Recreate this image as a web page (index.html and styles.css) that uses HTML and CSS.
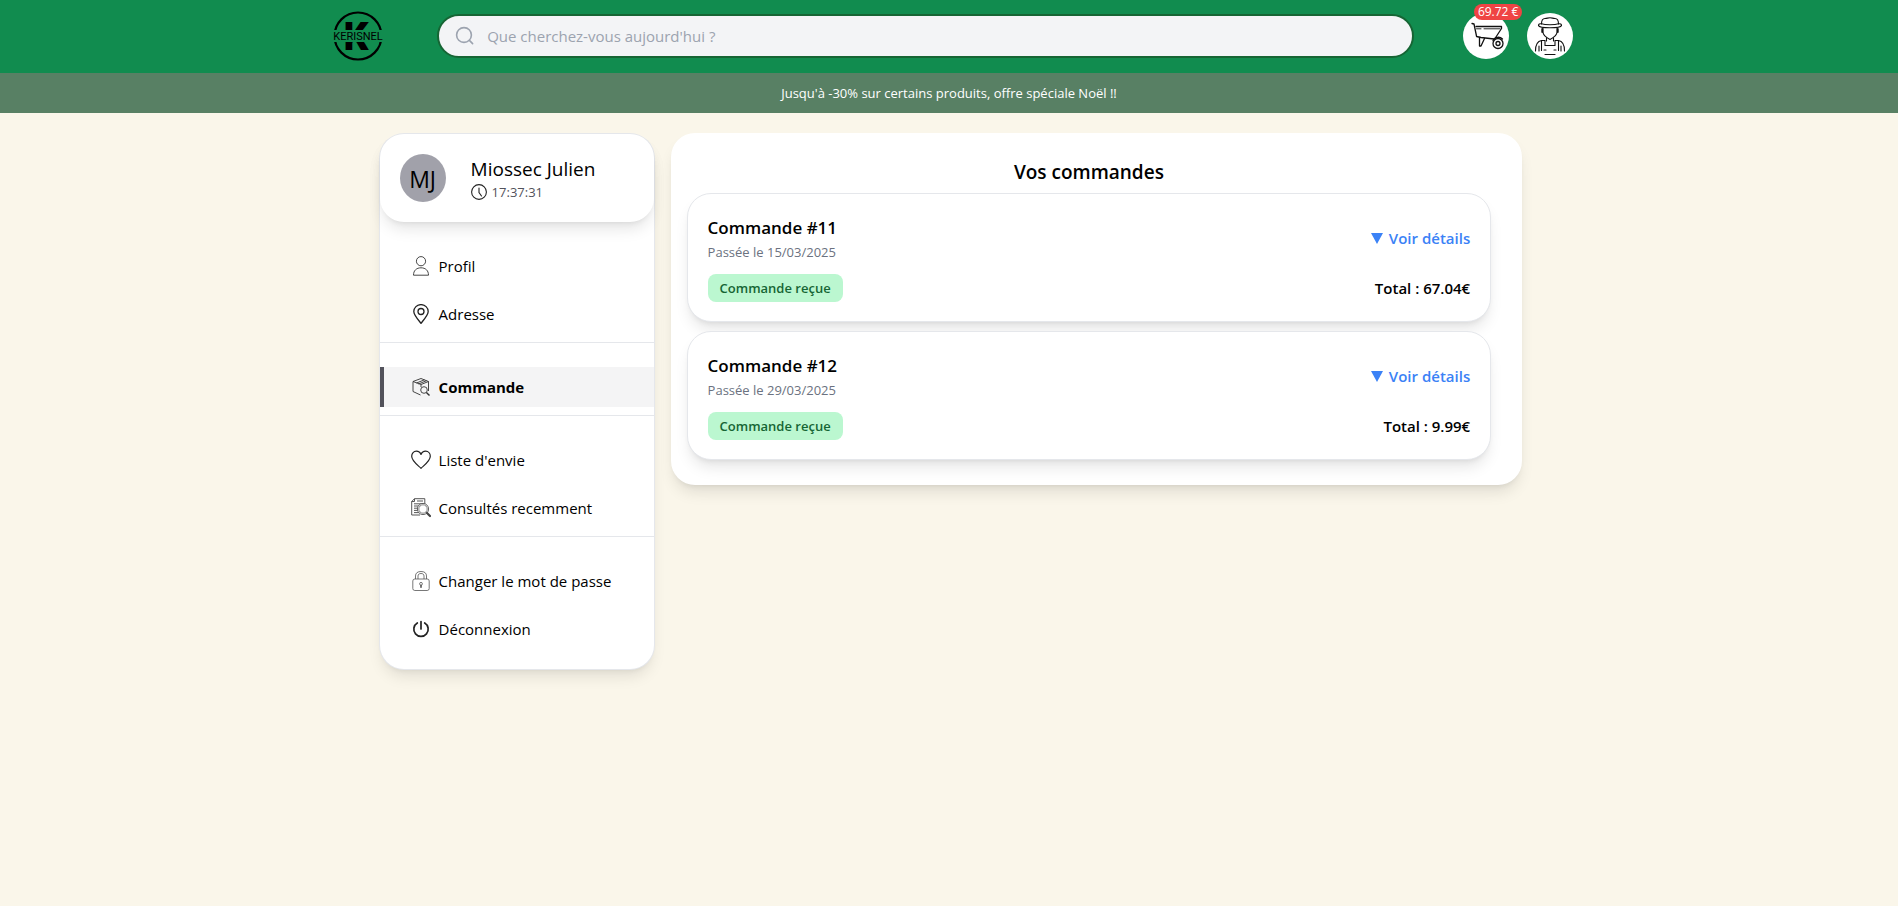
FILE: index.html
```html
<!DOCTYPE html>
<html lang="fr">
<head>
<meta charset="utf-8">
<meta name="viewport" content="width=device-width, initial-scale=1">
<title>Kerisnel - Vos commandes</title>
<link rel="stylesheet" href="styles.css">
</head>
<body>
<header class="topbar">
  <a class="logo" href="#" aria-label="Kerisnel">
    <svg viewBox="0 0 52 52" width="52" height="52">
      <circle cx="26" cy="26" r="23.5" fill="none" stroke="#000" stroke-width="2.2"/>
      <text class="logo-k" x="24" y="40" text-anchor="middle">K</text>
      <rect class="logo-band" x="0" y="20" width="52" height="12"/>
      <text class="logo-name" x="26" y="30" text-anchor="middle">KERISNEL</text>
    </svg>
  </a>
  <form class="search" role="search">
    <svg class="search-icon" viewBox="0 0 20 20" width="20" height="20" fill="none" stroke="#9ca3af" stroke-width="1.6" stroke-linecap="round"><circle cx="9" cy="9" r="7.4"/><path d="M14.4 14.4 17.6 17.6"/></svg>
    <input class="search-input" type="search" aria-label="Rechercher" placeholder="Que cherchez-vous aujourd'hui ?">
  </form>
  <nav class="actions" aria-label="Compte">
    <a class="round" href="#" aria-label="Panier">
      <svg viewBox="0 0 46 46" width="46" height="46" fill="none" stroke="#111" stroke-width="1.3" stroke-linecap="round" stroke-linejoin="round">
        <path d="M9 10.5 11 11 13.6 23.5 18 24.5 31 26"/><path d="M13 13.5H38.5V15.5L32 25.5"/><path d="M13.5 15.8H18M21 15.8H37" stroke-width=".9"/><path d="M16.5 24.5V33H18L21.5 25.5"/>
        <circle cx="35" cy="30.5" r="5"/><circle cx="35" cy="30.5" r="2"/><path d="M30 27.5C32 23.5 37 23.5 39.5 26"/>
      </svg>
      <span class="amount">69.72 €</span>
    </a>
    <a class="round" href="#" aria-label="Mon compte">
      <svg viewBox="0 0 46 46" width="46" height="46" fill="none" stroke="#111" stroke-width="1.1" stroke-linecap="round" stroke-linejoin="round">
        <path d="M14.5 11C14.5 7.5 16 5.5 18 5.5 20 5.5 21 4.8 23 4.8S26 5.5 28 5.5C30 5.5 31.5 7.5 31.5 11"/><path d="M14.5 10.8C18 12 28 12 31.5 10.8C33.5 10.5 34.5 11 34.5 12.5 34 14.2 28 14.8 23 14.8S12 14.2 11.5 12.5C11.5 11 12.5 10.5 14.5 10.8Z"/>
        <path d="M16 15V19C16 21 18 24 23 26.5 28 24 30 21 30 19V15"/><path d="M15.2 16V19M30.8 16V19" stroke-width="1.800"/><path d="M19.500 25V28M26.500 25V28"/>
        <path d="M14.500 27.500H18M28 27.500H31.500M14.500 27.500C11 28 8.500 30 8.500 38M31.500 27.500C35 28 37.500 30 37.500 38"/><path d="M14.500 28V37.500M18 28V32.500H28V28M31.500 28V37.500M12 33V38M34 33V38M17 37H19M27 37H29"/><path d="M18 41.500H28"/>
      </svg>
    </a>
  </nav>
</header>
<p class="promo">Jusqu'à -30% sur certains produits, offre spéciale Noël !!</p>

<main class="layout">
  <aside class="sidebar">
    <section class="user">
      <span class="avatar">MJ</span>
      <div class="who">
        <p class="name">Miossec Julien</p>
        <p class="clock">
          <svg viewBox="0 0 16 16" width="16" height="16" fill="none" stroke="#222" stroke-width="1.1" stroke-linecap="round"><circle cx="8" cy="8" r="7.4"/><path d="M8 4V8.5L10.5 12"/></svg>
          <time>17:37:31</time>
        </p>
      </div>
    </section>
    <nav aria-label="Espace client">
      <ul class="group">
        <li><a class="item" href="#"><svg viewBox="0 0 20 20" width="20" height="20" fill="none" stroke="#333" stroke-width=".9"><circle cx="10" cy="5.2" r="4.6"/><path d="M2.5 19.2C2.5 14.5 5.5 11.8 10 11.8S17.5 14.5 17.5 19.2Z"/></svg>Profil</a></li>
        <li><a class="item" href="#"><svg viewBox="0 0 20 20" width="20" height="20" fill="none" stroke="#222" stroke-width="1.3"><path d="M10 19.3C6.5 15 2.8 11 2.8 7.5A7.2 6.9 0 0 1 17.2 7.5C17.2 11 13.5 15 10 19.3Z"/><circle cx="10" cy="7.5" r="3"/></svg>Adresse</a></li>
      </ul>
      <ul class="group">
        <li><a class="item active" href="#" aria-current="page"><svg viewBox="0 0 20 20" width="20" height="20" fill="none" stroke="#333" stroke-width=".9" stroke-linejoin="round"><path d="M9.500 18 2 14.5V4.500L10 1.500 17.500 4.500V14M2 4.500 10 7.500 17.500 4.500M5.500 6 13.500 2.800M7.500 7 15.500 3.700M10 7.500V10"/><circle cx="13" cy="13" r="3.300" fill="#f4f4f5"/><path d="M15.400 15.400 18.500 18.500" stroke-width="1.400"/></svg>Commande</a></li>
      </ul>
      <ul class="group">
        <li><a class="item" href="#"><svg viewBox="0 0 20 20" width="20" height="20" fill="none" stroke="#222" stroke-width="1.200" stroke-linejoin="round"><path d="M10 18.300C6.500 15 .7 11 .7 6.300.7 3.200 2.800 1.200 5.300 1.200 7.500 1.200 9.200 2.300 10 4.500 10.800 2.300 12.500 1.200 14.700 1.200 17.200 1.200 19.300 3.200 19.300 6.300 19.300 11 13.500 15 10 18.300Z"/></svg>Liste d'envie</a></li>
        <li><a class="item" href="#"><svg viewBox="0 0 20 20" width="20" height="20" fill="none" stroke="#444" stroke-width=".9"><path d="M9 17H.7V3.500L3.500.7H13.800V6M3.500.7V3.500H.7M6 3H12M3 5.800H12M3 8H8M3 10.200H7M3 12.400H7M3 14.600H8"/><circle cx="12" cy="11" r="5.600" fill="#fff" stroke="#555"/><circle cx="12" cy="11" r="4.200" stroke="#777"/><path d="M16 15 19 18" stroke-width="2.200" stroke-linecap="round"/></svg>Consultés recemment</a></li>
      </ul>
      <ul class="group">
        <li><a class="item" href="#"><svg viewBox="0 0 20 20" width="20" height="20" fill="none" stroke="#555" stroke-width=".8"><rect x="1.800" y="8" width="16.400" height="11.500" rx="2"/><path d="M4.500 8V5C4.500 2 6.500.5 10 .5S15.500 2 15.500 5V8M7 8V5C7 3.500 8 2.500 10 2.500S13 3.500 13 5V8M9.500 14V16.500H10.500V14"/><circle cx="10" cy="12.800" r="1.400"/></svg>Changer le mot de passe</a></li>
        <li><a class="item" href="#"><svg viewBox="0 0 20 20" width="20" height="20" fill="none" stroke="#222" stroke-width="1.700" stroke-linecap="round"><path d="M10 2.500V10M6.300 4A7.200 7.200 0 1 0 13.700 4"/></svg>Déconnexion</a></li>
      </ul>
    </nav>
  </aside>

  <section class="panel">
    <h1 class="title">Vos commandes</h1>
    <div class="orders">
      <article class="order">
        <div class="row">
          <div>
            <h2 class="order-name">Commande #11</h2>
            <p class="date">Passée le 15/03/2025</p>
          </div>
          <button class="details" type="button"><svg viewBox="0 0 12 11" width="12" height="11"><path d="M0 0H12L6 11Z" fill="#3b82f6"/></svg>Voir détails</button>
        </div>
        <div class="row">
          <span class="status">Commande reçue</span>
          <p class="total">Total : 67.04€</p>
        </div>
      </article>
      <article class="order">
        <div class="row">
          <div>
            <h2 class="order-name">Commande #12</h2>
            <p class="date">Passée le 29/03/2025</p>
          </div>
          <button class="details" type="button"><svg viewBox="0 0 12 11" width="12" height="11"><path d="M0 0H12L6 11Z" fill="#3b82f6"/></svg>Voir détails</button>
        </div>
        <div class="row">
          <span class="status">Commande reçue</span>
          <p class="total">Total : 9.99€</p>
        </div>
      </article>
    </div>
  </section>
</main>
</body>
</html>
```
FILE: styles.css
```css
*, *::before, *::after { box-sizing: border-box; }

body {
  margin: 0;
  min-height: 100vh;
  background: #faf6ea;
  color: #000;
  font: 15px/24px "Open Sans", "Noto Sans", sans-serif;
}

h1, h2, p, ul { margin: 0; padding: 0; }
ul { list-style: none; }
a { color: inherit; text-decoration: none; }
svg { display: block; flex: none; }

.topbar {
  display: flex;
  align-items: center;
  padding: 13px 17.1% 14px 17.5%;
  background: #118c4f;
}

.logo { flex: none; margin: -3px 0; }
.logo-k { font: 900 39px Roboto, sans-serif; }
.logo-band { fill: #118c4f; }
.logo-name { font: 400 11px Roboto, sans-serif; }

.search {
  flex: 1;
  display: flex;
  align-items: center;
  gap: 12px;
  height: 44px;
  margin: 0 49px 0 53px;
  padding: 0 16px;
  border: 2px solid #166534;
  border-radius: 22px;
  background: #f3f4f6;
}

.search-input {
  flex: 1;
  min-width: 0;
  padding: 0;
  border: 0;
  outline: 0;
  background: none;
  font: inherit;
}
.search-input::placeholder { color: #9ca3af; opacity: 1; }

.actions { display: flex; gap: 18px; }

.round {
  position: relative;
  width: 46px;
  height: 46px;
  border-radius: 50%;
  background: #fff;
}

.amount {
  position: absolute;
  top: -9px;
  right: -13px;
  padding: 0 4px;
  border-radius: 8px;
  background: #ef4444;
  color: #fff;
  font-size: 12px;
  line-height: 16px;
  white-space: nowrap;
}

.promo {
  padding: 8px;
  background: #588064;
  color: #fff;
  font-size: 13px;
  text-align: center;
}

.layout {
  display: flex;
  align-items: flex-start;
  gap: 17px;
  padding: 20px 19.8% 20px 20%;
}

.sidebar {
  flex: none;
  width: 274px;
  margin-top: 1px;
  padding-bottom: 20px;
  border-radius: 24px;
  background: #fff;
  box-shadow: 0 0 0 1px #e5e7eb, 0 10px 15px -3px #0000001a, 0 4px 6px -4px #0000001a;
}

.user {
  display: flex;
  align-items: center;
  gap: 25px;
  padding: 20px;
  border-radius: 24px;
  box-shadow: 0 10px 15px -3px #0000001a, 0 4px 6px -4px #0000001a;
}

.avatar {
  display: grid;
  place-items: center;
  width: 46px;
  height: 48px;
  padding-top: 2px;
  border-radius: 50%;
  background: #a1a1aa;
  font-size: 23px;
}

.name { font-size: 19px; line-height: 28px; }
.clock { display: flex; align-items: center; gap: 5px; color: #52525b; font-size: 13px; line-height: 18px; }

.group { display: grid; gap: 8px; padding: 24px 0 8px; }
.group + .group { border-top: 1px solid #e5e7eb; }
.group:last-child { padding-bottom: 0; }

.item {
  display: flex;
  align-items: center;
  gap: 8px;
  padding: 8px 8px 8px 27px;
  border-left: 4px solid transparent;
}
.item.active { border-color: #52525b; background: #f4f4f5; font-weight: 700; }

.panel {
  flex: 1;
  min-width: 0;
  padding: 25px 31px 25px 16px;
  border-radius: 24px;
  background: #fff;
  box-shadow: 0 10px 15px -3px #0000001a, 0 4px 6px -4px #0000001a;
}

.title { font-size: 19px; line-height: 28px; font-weight: 600; text-align: center; }

.orders { display: grid; gap: 9px; margin-top: 7px; }

.order {
  display: grid;
  gap: 12px;
  padding: 20px 20px 19px;
  border: 1px solid #e5e7eb;
  border-radius: 24px;
  background: #fff;
  box-shadow: 0 10px 15px -3px #0000001a, 0 4px 6px -4px #0000001a;
}

.row { display: flex; align-items: center; justify-content: space-between; }
.order-name { font-size: 17px; line-height: 28px; font-weight: 600; }
.date { color: #6b7280; font-size: 13px; line-height: 20px; }

.details {
  display: flex;
  align-items: center;
  gap: 6px;
  padding: 0;
  border: 0;
  background: none;
  color: #3b82f6;
  font: inherit;
  font-weight: 600;
  cursor: pointer;
}

.status {
  padding: 4px 12px;
  border-radius: 8px;
  background: #bbf7d0;
  color: #166534;
  font-size: 13px;
  line-height: 20px;
  font-weight: 600;
}

.total { font-weight: 600; }
```
